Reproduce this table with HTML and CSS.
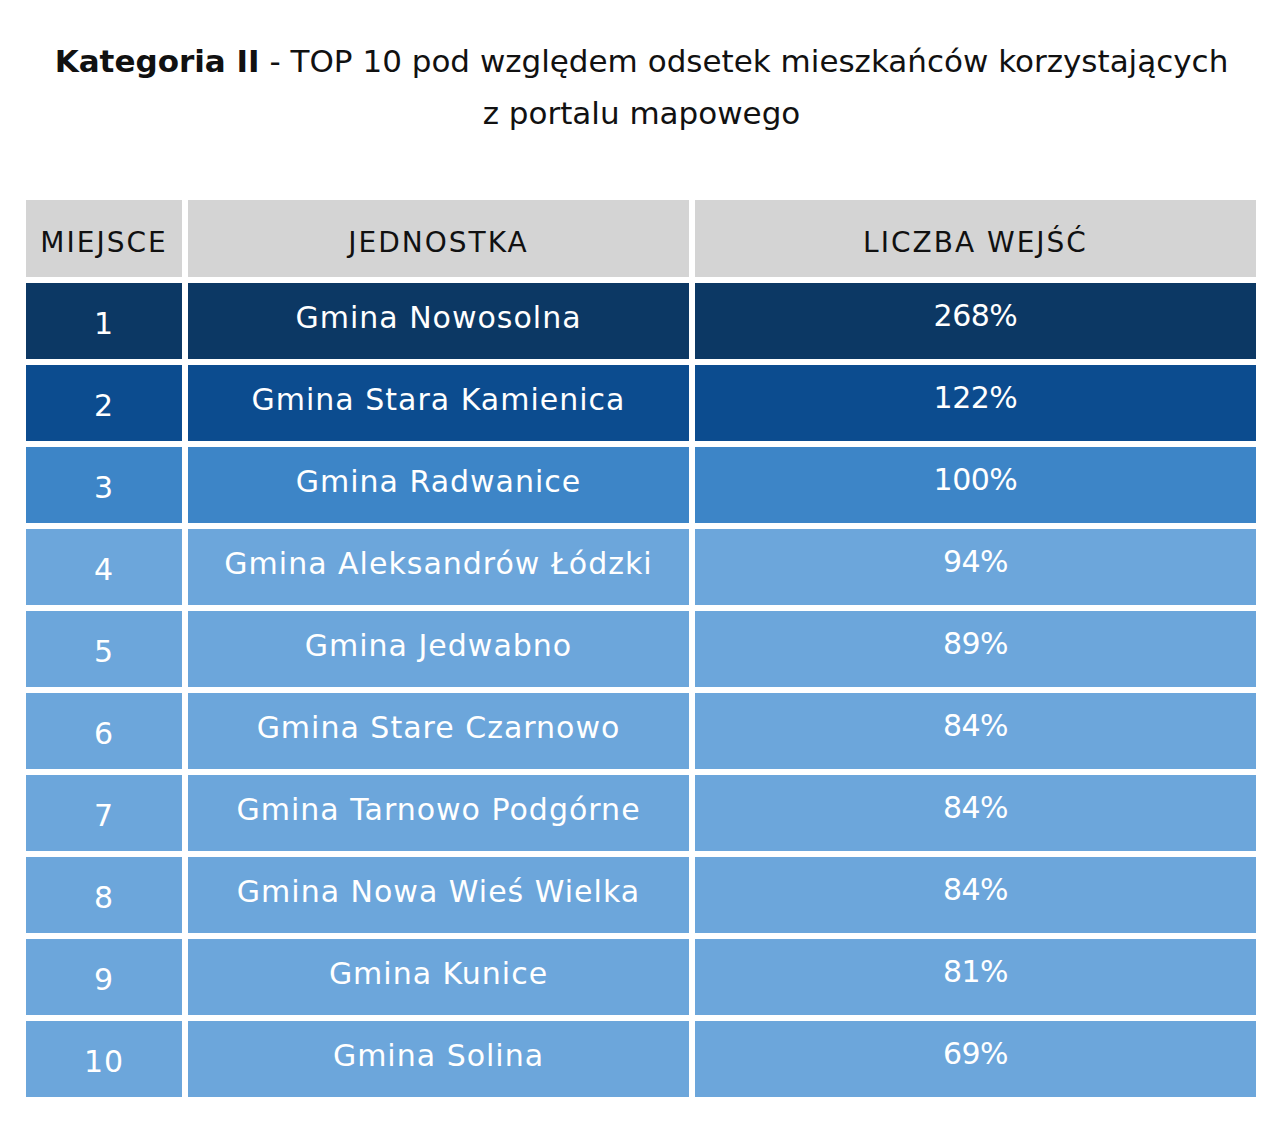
FILE: index.html
```html
<!DOCTYPE html>
<html lang="pl">
<head>
<meta charset="utf-8">
<title>Kategoria II</title>
<link rel="stylesheet" href="styles.css">
</head>
<body>
<div class="page">
  <h1 class="title"><strong>Kategoria II</strong> - TOP 10 pod względem odsetek mieszkańców korzystających<br>z portalu mapowego</h1>
  <div class="table">
    <div class="row head">
      <div class="cell c1">MIEJSCE</div>
      <div class="cell c2">JEDNOSTKA</div>
      <div class="cell c3">LICZBA WEJŚĆ</div>
    </div>
    <div class="row r1">
      <div class="cell c1"><span class="rank">1</span></div>
      <div class="cell c2"><span class="val">Gmina Nowosolna</span></div>
      <div class="cell c3"><span class="pct">268%</span></div>
    </div>
    <div class="row r2">
      <div class="cell c1"><span class="rank">2</span></div>
      <div class="cell c2"><span class="val">Gmina Stara Kamienica</span></div>
      <div class="cell c3"><span class="pct">122%</span></div>
    </div>
    <div class="row r3">
      <div class="cell c1"><span class="rank">3</span></div>
      <div class="cell c2"><span class="val">Gmina Radwanice</span></div>
      <div class="cell c3"><span class="pct">100%</span></div>
    </div>
    <div class="row rl">
      <div class="cell c1"><span class="rank">4</span></div>
      <div class="cell c2"><span class="val">Gmina Aleksandrów Łódzki</span></div>
      <div class="cell c3"><span class="pct">94%</span></div>
    </div>
    <div class="row rl">
      <div class="cell c1"><span class="rank">5</span></div>
      <div class="cell c2"><span class="val">Gmina Jedwabno</span></div>
      <div class="cell c3"><span class="pct">89%</span></div>
    </div>
    <div class="row rl">
      <div class="cell c1"><span class="rank">6</span></div>
      <div class="cell c2"><span class="val">Gmina Stare Czarnowo</span></div>
      <div class="cell c3"><span class="pct">84%</span></div>
    </div>
    <div class="row rl">
      <div class="cell c1"><span class="rank">7</span></div>
      <div class="cell c2"><span class="val">Gmina Tarnowo Podgórne</span></div>
      <div class="cell c3"><span class="pct">84%</span></div>
    </div>
    <div class="row rl">
      <div class="cell c1"><span class="rank">8</span></div>
      <div class="cell c2"><span class="val">Gmina Nowa Wieś Wielka</span></div>
      <div class="cell c3"><span class="pct">84%</span></div>
    </div>
    <div class="row rl">
      <div class="cell c1"><span class="rank">9</span></div>
      <div class="cell c2"><span class="val">Gmina Kunice</span></div>
      <div class="cell c3"><span class="pct">81%</span></div>
    </div>
    <div class="row rl">
      <div class="cell c1"><span class="rank">10</span></div>
      <div class="cell c2"><span class="val">Gmina Solina</span></div>
      <div class="cell c3"><span class="pct">69%</span></div>
    </div>
  </div>
</div>
</body>
</html>
```
FILE: styles.css
```css
html, body {
  margin: 0;
  padding: 0;
  background: #ffffff;
}
body {
  font-family: "DejaVu Sans", "Liberation Sans", sans-serif;
  color: #111111;
}
.page {
  width: 1280px;
  height: 1125px;
  padding-top: 35px;
  box-sizing: border-box;
}
.title {
  margin: 0 0 61px 0;
  text-align: center;
  font-size: 31px;
  font-weight: normal;
  line-height: 52px;
  letter-spacing: 0;
  padding-left: 3px;
}
.title strong {
  font-weight: bold;
}
.table {
  margin-left: 26px;
  width: 1230px;
  display: flex;
  flex-direction: column;
  gap: 6px;
}
.row {
  display: grid;
  grid-template-columns: 156px 501px 561px;
  column-gap: 6px;
  height: 76px;
}
.row.head {
  height: 77px;
}
.cell {
  display: flex;
  align-items: center;
  justify-content: center;
  color: #ffffff;
  font-size: 30px;
  letter-spacing: 1px;
}
.head .cell {
  background: #d4d4d4;
  color: #111111;
  font-size: 28px;
  letter-spacing: 2px;
  padding-top: 8px;
}
.r1 .cell { background: #0c3864; }
.r2 .cell { background: #0c4c8f; }
.r3 .cell { background: #3d85c7; }
.rl .cell { background: #6ca6db; }
.rank {
  padding-top: 4px;
}
.val {
  padding-bottom: 8px;
}
.pct {
  padding-bottom: 12px;
  letter-spacing: -0.5px;
}
```
